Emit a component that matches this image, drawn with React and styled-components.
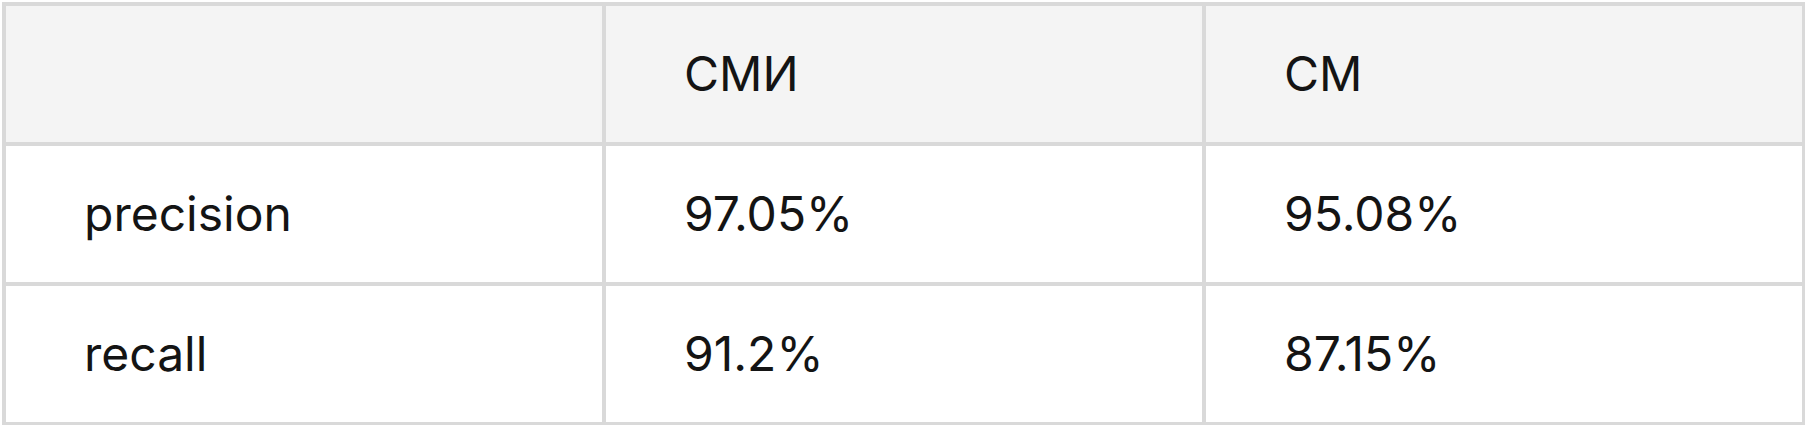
import React from "react";
import styled, { createGlobalStyle } from "styled-components";

const GlobalStyle = createGlobalStyle`
  body {
    margin: 0;
    background: #ffffff;
    font-family: Inter, "Noto Sans", sans-serif;
  }
`;

const Table = styled.div`
  margin: 2px;
  width: max-content;
  display: grid;
  grid-template-columns: repeat(3, 596px);
  grid-auto-rows: 136px;
  gap: 4px;
  padding: 4px;
  background: #d9d9d9;
`;

const Row = styled.div`
  display: contents;
`;

const Cell = styled.div`
  display: flex;
  align-items: center;
  padding-left: 78px;
  background: ${(p) => (p.$head ? "#f4f4f4" : "#ffffff")};
  color: #141414;
  font-size: 48px;
  line-height: 1;
  font-variant-numeric: proportional-nums;
`;

const rows = [
  ["precision", "97.05%", "95.08%"],
  ["recall", "91.2%", "87.15%"],
];

export default function App() {
  return (
    <>
      <GlobalStyle />
      <Table>
        <Row>
          <Cell $head></Cell>
          <Cell $head>СМИ</Cell>
          <Cell $head>СМ</Cell>
        </Row>
        {rows.map((r) => (
          <Row key={r[0]}>
            {r.map((v, i) => (
              <Cell key={i}>{v}</Cell>
            ))}
          </Row>
        ))}
      </Table>
    </>
  );
}
